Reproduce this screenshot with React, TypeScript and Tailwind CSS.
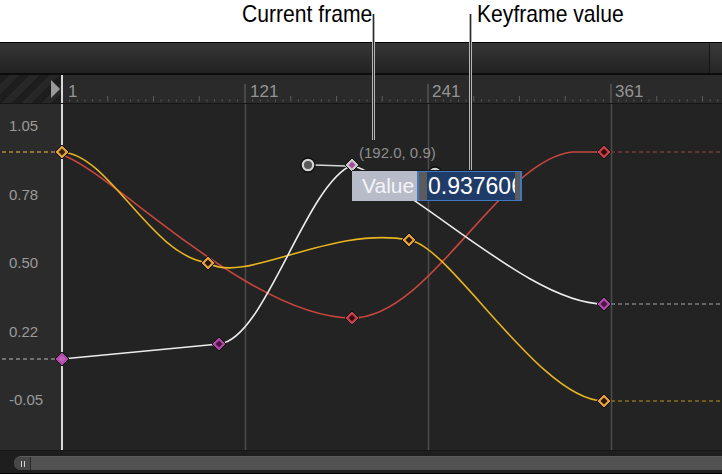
import React from "react";

type Key = { x: number; y: number; fill: string; inner: string };

// keyframes in page coordinates
const keys: Key[] = [
  { x: 62, y: 152, fill: "#e3a23a", inner: "#3a2208" },
  { x: 208, y: 263, fill: "#e3a23a", inner: "#2a1606" },
  { x: 409, y: 240, fill: "#e3a23a", inner: "#2a1606" },
  { x: 604, y: 401, fill: "#e3a23a", inner: "#2a1606" },
  { x: 352, y: 318, fill: "#c9414b", inner: "#3a0c10" },
  { x: 604, y: 152, fill: "#c9414b", inner: "#3a0c10" },
  { x: 62, y: 359, fill: "#b149a9", inner: "#c35fbb" },
  { x: 219, y: 344, fill: "#b149a9", inner: "#4a1246" },
  { x: 604, y: 304, fill: "#b149a9", inner: "#4a1246" },
  { x: 352, y: 165, fill: "#c9c9c9", inner: "#a9479f" },
];

const labels = ["1.05", "0.78", "0.50", "0.22", "-0.05"];

function Diamond({ x, y, fill, inner }: Key) {
  return (
    <g>
      <path
        d={`M${x} ${y - 7} L${x + 7} ${y} L${x} ${y + 7} L${x - 7} ${y} Z`}
        fill={fill}
        stroke="#111"
        strokeWidth={1}
      />
      <path
        d={`M${x} ${y - 3.5} L${x + 3.5} ${y} L${x} ${y + 3.5} L${x - 3.5} ${y} Z`}
        fill={inner}
      />
    </g>
  );
}

function Handle({ x, y }: { x: number; y: number }) {
  return (
    <g>
      <circle cx={x} cy={y} r={7} fill="#d2d2d2" stroke="#0e0e0e" strokeWidth={1.4} />
      <circle cx={x} cy={y} r={4} fill="#585858" />
    </g>
  );
}

function Ruler() {
  const ticks = [];
  for (let i = 0; i <= 87; i++) {
    const x = 62 + i * 7.625;
    if (i % 24 === 0) continue;
    const tall = i % 6 === 0;
    ticks.push(
      <line
        key={i}
        x1={x}
        x2={x}
        y1={tall ? 97 : 100.5}
        y2={102.5}
        stroke="#5c5c5c"
        strokeWidth={1}
      />,
    );
  }
  return (
    <svg width={659} height={28} viewBox="63 76 659 28" className="block">
      {ticks}
      {[245, 428, 611].map((x) => (
        <line key={x} x1={x} x2={x} y1={85} y2={104} stroke="#555" strokeWidth={1.5} />
      ))}
      {[
        [68, "1"],
        [250, "121"],
        [432, "241"],
        [615, "361"],
      ].map(([x, t]) => (
        <text
          key={t as string}
          x={x as number}
          y={98}
          fill="#949494"
          fontSize={17}
          fontFamily="'Liberation Sans', Arial, sans-serif">
          {t}
        </text>
      ))}
    </svg>
  );
}

function Curves() {
  return (
    <svg
      width={722}
      height={346}
      viewBox="0 104 722 346"
      className="absolute inset-0"
      fill="none">
      {[245.5, 428.5, 611.5].map((x) => (
        <line key={x} x1={x} x2={x} y1={104} y2={450} stroke="#4b4b4b" strokeWidth={1.5} />
      ))}

      {/* extrapolation */}
      <line x1={2} x2={56} y1={152} y2={152} stroke="#b8863a" strokeWidth={1.5} strokeDasharray="4 3" />
      <line x1={2} x2={56} y1={359} y2={359} stroke="#8a8a8a" strokeWidth={1.5} strokeDasharray="4 3" />
      <line x1={611} x2={722} y1={152} y2={152} stroke="#7a3838" strokeWidth={1.5} strokeDasharray="4 3" />
      <line x1={611} x2={722} y1={304} y2={304} stroke="#7e7e7e" strokeWidth={1.5} strokeDasharray="4 3" />
      <line x1={611} x2={722} y1={401} y2={401} stroke="#8a6d1c" strokeWidth={1.5} strokeDasharray="4 3" />

      <path
        d="M62 155 C110 170 250 318 352 318 C430 318 500 160 572 152 L604 152"
        stroke="#c8463e"
        strokeWidth={1.6}
      />
      <path
        d="M62 152 C110 155 150 255 208 263 C245 285 330 225 409 240 C450 245 540 401 604 401"
        stroke="#e6b51f"
        strokeWidth={1.6}
      />
      <path
        d="M62 359 L219 344 C265 340 305 185 352 165 C420 190 530 304 604 304"
        stroke="#ececec"
        strokeWidth={1.6}
      />
      <line x1={314} x2={346} y1={165} y2={166} stroke="#d8d8d8" strokeWidth={1.5} />
      <Handle x={308} y={165} />
      <Handle x={435} y={174} />

      {keys.map((k, i) => (
        <Diamond key={i} {...k} />
      ))}
    </svg>
  );
}

export default function App() {
  return (
    <div className="relative w-[722px] h-[476px] bg-white overflow-hidden font-['Liberation_Sans',Arial,sans-serif]">
      {/* callouts */}
      <div className="flex h-[42px] text-[24px] leading-[28px] text-black">
        <span className="ml-[242px] w-[131px] whitespace-nowrap origin-left scale-x-[0.88]">
          Current frame
        </span>
        <span className="ml-[104px] whitespace-nowrap origin-left scale-x-[0.88]">
          Keyframe value
        </span>
      </div>
      <div className="absolute left-[372px] top-[14px] h-[126px] w-[3px] bg-[#2a2a2a] border-x border-[#b5b5b5] z-10" />
      <div className="absolute left-[469px] top-[14px] h-[156px] w-[3px] bg-[#2a2a2a] border-x border-[#b5b5b5] z-10" />

      <div className="flex flex-col h-[432px] bg-black border-t border-black">
        {/* header */}
        <div className="flex h-[30px] bg-linear-to-b from-[#363636] to-[#222]">
          <div className="flex-1 border-r border-[#151515]" />
          <div className="w-[12px] bg-linear-to-b from-[#3a3a3a] to-[#262626]" />
        </div>
        <div className="h-[2px] bg-[#0c0c0c]" />

        {/* ruler */}
        <div className="flex h-[28px] bg-[#2a2a2a]">
          <div className="relative w-[61px] bg-[repeating-linear-gradient(135deg,#1d1d1d_0_7px,#272727_7px_14px)]">
            <div className="absolute right-[1px] top-[5px] w-0 h-0 border-y-[9px] border-y-transparent border-l-[9px] border-l-[#9a9a9a]" />
          </div>
          <div className="border-l-2 border-[#d8d8d8]">
            <Ruler />
          </div>
        </div>
        <div className="h-px bg-[#161616]" />

        {/* graph */}
        <div className="relative flex h-[346px]">
          <div className="w-[61px] bg-[#2b2b2b] flex flex-col gap-[51.5px] pt-[13px] pl-[9px] text-[15px] leading-[17px] text-[#9a9a9a]">
            {labels.map((l) => (
              <span key={l}>{l}</span>
            ))}
          </div>
          <div className="flex-1 bg-[#232323] border-l-2 border-[#d8d8d8]" />
          <Curves />

          <span className="absolute left-[359px] top-[40px] text-[15px] leading-[17px] text-[#8e8e8e] whitespace-nowrap">
            (192.0, 0.9)
          </span>

          {/* value field */}
          <div className="absolute left-[352px] top-[66px] flex h-[31px] w-[170px] border-t border-[#1a1a1a]">
            <div className="flex items-center w-[65px] bg-[#b8bcc9] pl-[10px] text-[21px] text-[#f4f4f6]">
              Value
            </div>
            <div className="flex flex-1 overflow-hidden border-x-2 border-y border-[#4278c0] bg-[#1f3b67]">
              <div className="w-[8px] shrink-0 bg-[#5b5b5b]" />
              <div className="flex-1 overflow-hidden flex items-center pl-[1px] text-[23px] text-white whitespace-nowrap">
                0.937606
              </div>
              <div className="w-[5px] shrink-0 bg-[#5b5b5b]" />
            </div>
          </div>
        </div>

        {/* scrollbar */}
        <div className="flex h-[23px] bg-[#1e1e1e] pt-[5px] pb-[3px] pl-[14px] border-t border-[#191919]">
          <div className="flex flex-1 rounded-l-full bg-[#525252] border-t border-[#5c5c5c]">
            <div className="flex items-center justify-center gap-[2px] w-[17px] rounded-l-full bg-[#474747] border-r border-[#2a2a2a] pl-[2px]">
              <div className="w-px h-[6px] bg-[#d0d0d0]" />
              <div className="w-px h-[6px] bg-[#d0d0d0]" />
            </div>
          </div>
        </div>
      </div>
    </div>
  );
}
